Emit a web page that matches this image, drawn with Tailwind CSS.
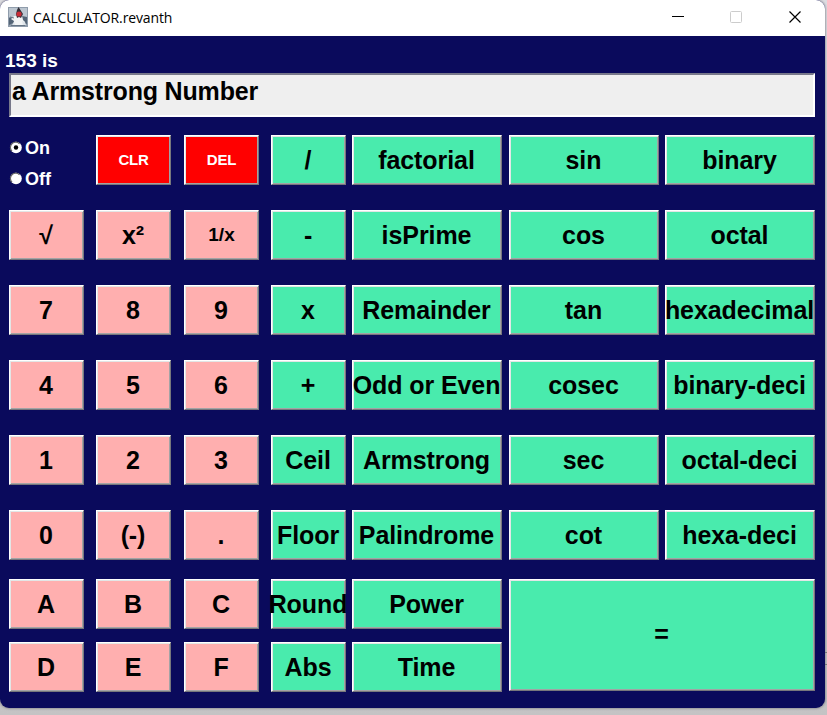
<!DOCTYPE html>
<html lang="en">
<head>
<meta charset="utf-8">
<title>CALCULATOR.revanth</title>
<script src="https://cdn.jsdelivr.net/npm/@tailwindcss/browser@4"></script>
</head>
<body class="w-[827px] h-[715px] overflow-hidden bg-linear-to-b from-[#dddde2] to-[#c4c3c4] font-['Liberation_Sans',Arial,sans-serif]">
<main class="relative w-[827px] h-[715px]">
  <div class="absolute right-0 top-[652px] w-[3px] h-[13px] border-t border-b border-[#777]"></div>
  <div class="relative w-[825px] h-[708px] rounded-[9px] overflow-hidden bg-[#0a0a5c] shadow-[0_0_2px_1px_rgba(120,120,130,.6)]">
    <header class="h-9 bg-white flex items-center pl-2">
      <svg class="w-5 h-5 shrink-0 -mt-0.5" viewBox="0 0 20 20">
        <rect width="20" height="20" fill="#8f9cab"/>
        <rect x="1" y="1" width="18" height="9" fill="#bcc6d0"/>
        <path d="M1 11l5-1 1 5-6 3zM14 9l5 1v7l-4-1z" fill="#536476"/>
        <path d="M6 9h8l1 4 2 2-1 3H5l1-4-3-2z" fill="#f2f4f5"/>
        <path d="M4 18l2-3 1 3zM14 14l3 1 1 3h-3z" fill="#dfe5ea"/>
        <path d="M10.500 0l2 3 2.500 4-2 4-2-1-2 1-1-4 1-4z" fill="#33313a"/>
        <circle cx="11" cy="7" r="2.600" fill="#c92c36"/>
        <path d="M2 10l4 1M3 18.500h14" stroke="#667585" fill="none"/>
      </svg>
      <h1 class="ml-[5px] -mt-px text-[14px] tracking-[-0.13px] text-black whitespace-nowrap font-['Open_Sans',sans-serif]">CALCULATOR.revanth</h1>
      <svg class="ml-auto mr-[23px] w-[131px] h-3 shrink-0 -mt-0.5" viewBox="0 0 131 12" fill="none">
        <path d="M1 5.500h12" stroke="#000"/>
        <rect x="59.5" y=".5" width="11" height="11" rx="1" stroke="#ccc"/>
        <path d="M118.500 .5l11 11M129.500 .5l-11 11" stroke="#000" stroke-width="1.2"/>
      </svg>
    </header>
    <section class="pt-[13px]">
      <p class="pl-[5px] h-6 leading-[23px] text-[19px] font-bold text-white">153 is</p>
      <div class="ml-[9px] w-[806px] h-11 bg-[#efefef] border-2 border-t-[#77788a] border-l-[#77788a] border-r-white border-b-white pl-px text-[25px] leading-[33px] tracking-[-0.17px] font-bold text-black">a Armstrong Number</div>
    </section>
    <section id="keys" class="mt-[18px] ml-[9px] grid grid-cols-[87px_88px_87px_81px_157px_156px_150px] grid-rows-[75px_75px_75px_75px_75px_69px_63px_50px] items-start">
      <div class="text-white text-[18px] font-bold">
        <div class="flex items-center h-[25px] gap-[3px]">
          <svg class="w-[13px] h-[13px]" viewBox="0 0 13 13"><circle cx="7" cy="6.500" r="5.800" fill="#fff"/><path d="M3 10.300A5.300 5.300 0 0 1 10.500 2.700" fill="none" stroke="#666" stroke-width="1.200"/><circle cx="7" cy="6.500" r="2.200" fill="#000"/></svg><span class="pt-0.5">On</span>
        </div>
        <div class="flex items-center h-[25px] gap-[3px] mt-1.5">
          <svg class="w-[13px] h-[13px]" viewBox="0 0 13 13"><circle cx="7" cy="6.500" r="5.800" fill="#fff"/><path d="M3 10.300A5.300 5.300 0 0 1 10.500 2.700" fill="none" stroke="#666" stroke-width="1.200"/></svg><span class="pt-0.5">Off</span>
        </div>
      </div>
    </section>
  </div>
</main>
<script>
const rows = [
  [null, 'CLR', 'DEL', '/', 'factorial', 'sin', 'binary'],
  ['√', 'x²', '1/x', '-', 'isPrime', 'cos', 'octal'],
  ['7', '8', '9', 'x', 'Remainder', 'tan', 'hexadecimal'],
  ['4', '5', '6', '+', 'Odd or Even', 'cosec', 'binary-deci'],
  ['1', '2', '3', 'Ceil', 'Armstrong', 'sec', 'octal-deci'],
  ['0', '(-)', '.', 'Floor', 'Palindrome', 'cot', 'hexa-deci'],
  ['A', 'B', 'C', 'Round', 'Power', '='],
  ['D', 'E', 'F', 'Abs', 'Time'],
];
const base = 'flex items-center justify-center whitespace-nowrap font-bold border border-t-white border-l-white border-r-[#77777c] border-b-[#77777c] shadow-[inset_1px_1px_0_#e3e6e6,inset_-1px_-1px_0_#a3a3a5] ';
const keys = document.getElementById('keys');
rows.forEach((row) => row.forEach((label, c) => {
  if (label === null) return;
  const b = document.createElement('button');
  const red = label === 'CLR' || label === 'DEL';
  const color = red ? 'bg-[#ff0000] text-white ' : c < 3 ? 'bg-[#ffafaf] text-black ' : 'bg-[#49ebad] text-black ';
  const size = red ? 'text-[15px] tracking-[-0.2px] ' : label === '1/x' ? 'text-[19px] ' : label === '=' ? 'text-[25px] pr-px ' : 'text-[25px] tracking-[-0.08px] pt-0.5 pr-px ';
  const box = label === '=' ? 'col-span-2 row-span-2 w-[306px] h-28' : c < 4 ? 'w-[75px] h-[50px]' : 'w-[150px] h-[50px]';
  b.className = base + color + size + box;
  b.textContent = label;
  keys.append(b);
}));
</script>
</body>
</html>
